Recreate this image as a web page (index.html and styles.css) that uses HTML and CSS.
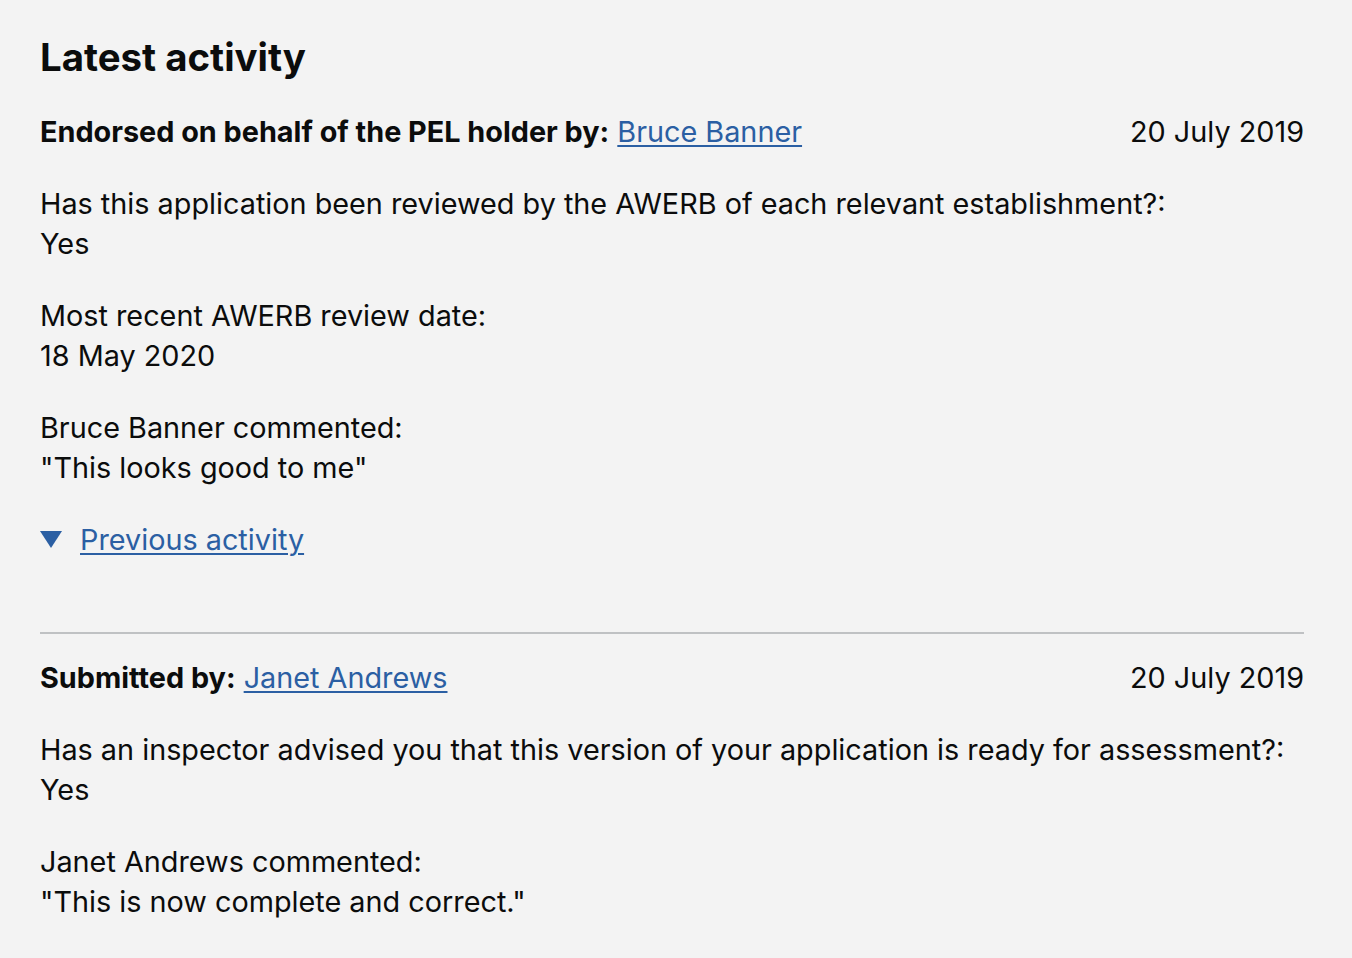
FILE: index.html
```
<!DOCTYPE html>
<html lang="en">
<head>
<meta charset="utf-8">
<title>Latest activity</title>
<link rel="stylesheet" href="styles.css">
</head>
<body>
<main class="page">
  <h2 class="title">Latest activity</h2>
  <section class="activity">
    <div class="activity-head">
      <p class="who"><strong>Endorsed on behalf of the PEL holder by:</strong> <a href="#">Bruce Banner</a></p>
      <span class="date">20 July 2019</span>
    </div>
    <p class="field">Has this application been reviewed by the AWERB of each relevant establishment?:<br>Yes</p>
    <p class="field">Most recent AWERB review date:<br>18 May 2020</p>
    <p class="field">Bruce Banner commented:<br>"This looks good to me"</p>
    <div class="toggle">
      <span class="tri"></span>
      <a href="#">Previous activity</a>
    </div>
  </section>
  <hr class="divider">
  <section class="activity">
    <div class="activity-head">
      <p class="who"><strong>Submitted by:</strong> <a href="#">Janet Andrews</a></p>
      <span class="date">20 July 2019</span>
    </div>
    <p class="field">Has an inspector advised you that this version of your application is ready for assessment?:<br>Yes</p>
    <p class="field">Janet Andrews commented:<br>"This is now complete and correct."</p>
  </section>
</main>
</body>
</html>
```
FILE: styles.css
```
html, body {
  margin: 0;
  background: #f3f3f3;
}
body {
  font-family: Inter, "Noto Sans", sans-serif;
  font-optical-sizing: none;
  color: #0b0c0c;
  font-size: 28.8px;
  line-height: 40px;
}
.page {
  padding: 33px 48px 0 40px;
}
.title {
  font-size: 38.4px;
  line-height: 48px;
  font-weight: 700;
  margin: 0 0 31px;
}
.activity-head {
  display: flex;
  justify-content: space-between;
  align-items: baseline;
  margin-bottom: 32px;
}
.who {
  margin: 0;
}
.who strong {
  font-weight: 700;
}
a {
  color: #2b5fa3;
  text-decoration: underline;
  text-underline-offset: 3px;
  text-decoration-thickness: 2px;
}
.field {
  margin: 0 0 32px;
}
.toggle {
  display: flex;
  align-items: center;
  gap: 18px;
}
.tri {
  width: 0;
  height: 0;
  border-left: 11px solid transparent;
  border-right: 11px solid transparent;
  border-top: 17px solid #2b5fa3;
  margin-top: -2px;
}
.divider {
  border: 0;
  border-top: 2px solid #bfc1c3;
  margin: 72px 0 24px;
}
```
